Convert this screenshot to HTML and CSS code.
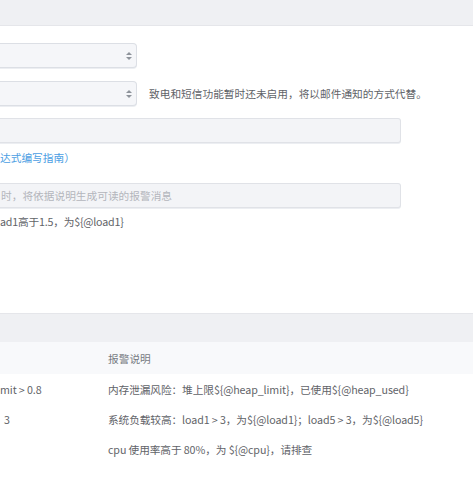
FILE: index.html
```html
<!DOCTYPE html>
<html lang="zh-CN">
<head>
<meta charset="utf-8">
<title>报警设置</title>
<link rel="stylesheet" href="styles.css">
</head>
<body>
<div class="topbar"></div>
<div class="form">
  <div class="row">
    <div class="select"><span class="arrows"><i class="up"></i><i class="down"></i></span></div>
  </div>
  <div class="row row-2">
    <div class="select"><span class="arrows"><i class="up"></i><i class="down"></i></span></div>
    <span class="note">致电和短信功能暂时还未启用，将以邮件通知的方式代替。</span>
  </div>
  <div class="input input-3"></div>
  <div class="link-row"><a class="link">达式编写指南）</a></div>
  <div class="input input-4"><span class="placeholder">时，将依据说明生成可读的报警消息</span></div>
  <div class="hint">ad1高于1.5，为${@load1}</div>
</div>
<div class="table">
  <div class="band"></div>
  <div class="thead">
    <div class="c1"></div>
    <div class="c2">报警说明</div>
  </div>
  <div class="tr">
    <div class="c1">mit &gt; 0.8</div>
    <div class="c2">内存泄漏风险：堆上限${@heap_limit}，已使用${@heap_used}</div>
  </div>
  <div class="tr">
    <div class="c1 c1-3">3</div>
    <div class="c2">系统负载较高：load1 &gt; 3，为${@load1}；load5 &gt; 3，为${@load5}</div>
  </div>
  <div class="tr">
    <div class="c1"></div>
    <div class="c2">cpu 使用率高于 80%，为 ${@cpu}，请排查</div>
  </div>
</div>
</body>
</html>
```
FILE: styles.css
```css
html, body {
  margin: 0;
  padding: 0;
  background: #ffffff;
}
body {
  font-family: "Noto Sans CJK SC", "Noto Sans", sans-serif;
  font-size: 10.7px;
  color: #666a70;
  overflow: hidden;
}
.topbar {
  height: 25px;
  background: #eff0f3;
  border-bottom: 1px solid #e5e6ea;
}
.form {
  padding-top: 17px;
}
.row {
  display: flex;
  align-items: center;
  height: 25px;
}
.row-2 {
  margin-top: 13px;
}
.select {
  box-sizing: border-box;
  width: 137px;
  height: 25px;
  background: #f5f6f9;
  border: 1px solid #dcdfe5;
  border-left: none;
  border-radius: 0 4px 4px 0;
  box-shadow: 0 1px 0 #eceef2;
  display: flex;
  align-items: center;
  justify-content: flex-end;
  padding-right: 4px;
}
.arrows {
  display: flex;
  flex-direction: column;
  gap: 2px;
}
.arrows i {
  display: block;
  width: 0;
  height: 0;
  border-left: 3px solid transparent;
  border-right: 3px solid transparent;
}
.arrows .up {
  border-bottom: 3.5px solid #8e939b;
}
.arrows .down {
  border-top: 3.5px solid #8e939b;
}
.note {
  margin-left: 12px;
  color: #5f6368;
}
.input {
  box-sizing: border-box;
  width: 401px;
  height: 25px;
  background: #f3f4f7;
  border: 1px solid #e0e2e7;
  border-left: none;
  border-radius: 0 3px 3px 0;
  box-shadow: 0 1px 0 #eceef2;
  display: flex;
  align-items: center;
}
.input-3 {
  margin-top: 12px;
}
.link-row {
  margin-top: 7px;
  height: 16px;
  line-height: 16px;
}
.link {
  color: #4b9ee3;
}
.input-4 {
  margin-top: 17px;
}
.placeholder {
  color: #b3b6bc;
  padding-left: 1px;
}
.hint {
  margin-top: 6px;
  height: 16px;
  line-height: 16px;
  color: #5f6368;
  letter-spacing: -0.2px;
}
.table {
  margin-top: 83px;
}
.band {
  height: 28px;
  background: #eff0f3;
  border-top: 1px solid #e5e6ea;
}
.thead,
.tr {
  display: flex;
  align-items: center;
}
.thead {
  height: 32px;
  background: #f8f9fb;
  color: #777b82;
}
.tr {
  height: 30px;
  color: #5f6368;
  letter-spacing: -0.1px;
}
.c1 {
  width: 108px;
  flex: none;
}
.c1-3 {
  padding-left: 4px;
  box-sizing: border-box;
}
.c2 {
  flex: 1;
  white-space: nowrap;
}
```
